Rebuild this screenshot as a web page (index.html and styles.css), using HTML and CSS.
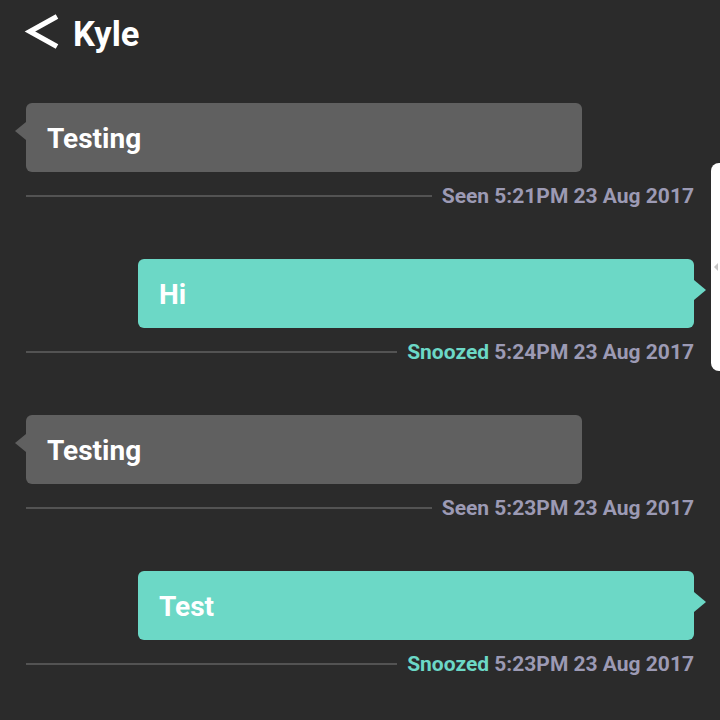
FILE: index.html
```html
<!DOCTYPE html>
<html>
<head>
<meta charset="utf-8">
<link rel="stylesheet" href="styles.css">
</head>
<body>
<div class="screen">
  <header class="header">
    <svg class="back" width="36" height="36" viewBox="0 0 36 36"><polyline points="33,2.5 6,17.5 33,32.5" fill="none" stroke="#ffffff" stroke-width="5.2" stroke-linejoin="miter"/></svg>
    <span class="title">Kyle</span>
  </header>
  <main class="thread">
    <div class="msg in">
      <div class="bubble">Testing</div>
      <div class="meta"><span class="rule"></span><span class="stamp">Seen 5:21PM 23 Aug 2017</span></div>
    </div>
    <div class="msg out">
      <div class="bubble">Hi</div>
      <div class="meta"><span class="rule"></span><span class="stamp"><span class="snz">Snoozed</span> 5:24PM 23 Aug 2017</span></div>
    </div>
    <div class="msg in">
      <div class="bubble">Testing</div>
      <div class="meta"><span class="rule"></span><span class="stamp">Seen 5:23PM 23 Aug 2017</span></div>
    </div>
    <div class="msg out">
      <div class="bubble">Test</div>
      <div class="meta"><span class="rule"></span><span class="stamp"><span class="snz">Snoozed</span> 5:23PM 23 Aug 2017</span></div>
    </div>
  </main>
  <div class="edge-panel"><span class="edge-arrow"></span></div>
</div>
</body>
</html>
```
FILE: styles.css
```css
html, body {
  margin: 0;
  padding: 0;
  background: #2b2b2b;
}
.screen {
  position: relative;
  width: 720px;
  height: 720px;
  overflow: hidden;
  font-family: Roboto, "Liberation Sans", sans-serif;
  background: #2b2b2b;
}
.header {
  display: flex;
  align-items: center;
  height: 66px;
  padding: 0 0 0 24px;
  gap: 13px;
}
.back { display: block; margin-top: -2px; }
.title {
  color: #ffffff;
  font-weight: 700;
  font-size: 34.5px;
  margin-top: 2px;
}
.thread {
  display: flex;
  flex-direction: column;
  padding: 37px 26px 0 26px;
  gap: 52px;
}
.msg {
  display: flex;
  flex-direction: column;
}
.bubble {
  position: relative;
  width: 556px;
  box-sizing: border-box;
  height: 69px;
  border-radius: 6px;
  display: flex;
  align-items: center;
  padding: 1px 21px 0 21px;
  color: #ffffff;
  font-weight: 700;
  font-size: 28px;
}
.in .bubble {
  background: #606060;
  align-self: flex-start;
}
.out .bubble {
  background: #6cd8c6;
  align-self: flex-end;
}
.in .bubble::before {
  content: "";
  position: absolute;
  left: -11px;
  top: 19px;
  border-style: solid;
  border-width: 9px 11px 9px 0;
  border-color: transparent #606060 transparent transparent;
}
.out .bubble::after {
  content: "";
  position: absolute;
  right: -12px;
  top: 21px;
  border-style: solid;
  border-width: 10px 0 10px 12px;
  border-color: transparent transparent transparent #6cd8c6;
}
.meta {
  display: flex;
  align-items: center;
  height: 22px;
  margin-top: 13px;
  gap: 10px;
}
.rule {
  flex: 1;
  height: 2px;
  background: #535353;
}
.stamp {
  color: #9c9ab4;
  font-weight: 700;
  font-size: 21px;
  white-space: nowrap;
}
.snz { color: #6cd8c6; }
.edge-panel {
  position: absolute;
  left: 711px;
  top: 163px;
  width: 20px;
  height: 208px;
  background: #ffffff;
  border-radius: 8px 0 0 8px;
}
.edge-arrow {
  position: absolute;
  left: 3px;
  top: 100px;
  border-style: solid;
  border-width: 4px 4px 4px 0;
  border-color: transparent #c4c4c4 transparent transparent;
}
```
